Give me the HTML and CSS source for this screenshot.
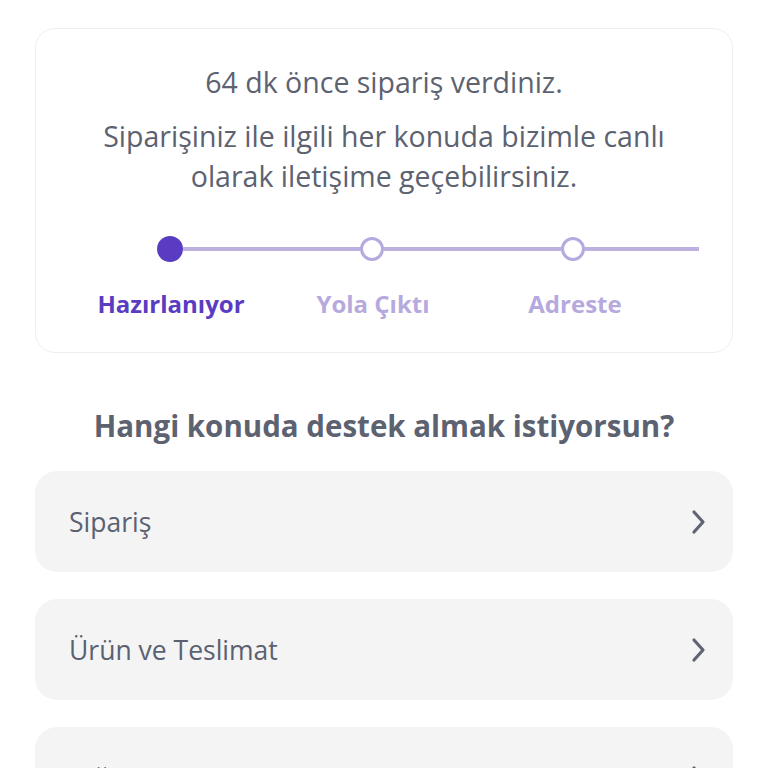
FILE: index.html
```html
<!DOCTYPE html>
<html lang="tr">
<head>
<meta charset="utf-8">
<link rel="stylesheet" href="styles.css">
</head>
<body>
<div class="page">
  <section class="card">
    <p class="time">64 dk önce sipariş verdiniz.</p>
    <p class="info">Siparişiniz ile ilgili her konuda bizimle canlı olarak iletişime geçebilirsiniz.</p>
    <div class="track">
      <span class="dot filled"></span>
      <span class="line l1"></span>
      <span class="dot"></span>
      <span class="line l1"></span>
      <span class="dot"></span>
      <span class="line l2"></span>
    </div>
    <div class="labels">
      <span class="label active">Hazırlanıyor</span>
      <span class="label">Yola Çıktı</span>
      <span class="label">Adreste</span>
    </div>
  </section>
  <h2 class="heading">Hangi konuda destek almak istiyorsun?</h2>
  <ul class="topics">
    <li class="topic"><span>Sipariş</span><svg class="chev" width="20" height="26" viewBox="0 0 20 26"><path d="M5 3 L14 13 L5 23" fill="none" stroke="#5f6570" stroke-width="3.2" stroke-linecap="round" stroke-linejoin="round"/></svg></li>
    <li class="topic"><span>Ürün ve Teslimat</span><svg class="chev" width="20" height="26" viewBox="0 0 20 26"><path d="M5 3 L14 13 L5 23" fill="none" stroke="#5f6570" stroke-width="3.2" stroke-linecap="round" stroke-linejoin="round"/></svg></li>
    <li class="topic"><span>Diğer</span><svg class="chev" width="20" height="26" viewBox="0 0 20 26"><path d="M5 3 L14 13 L5 23" fill="none" stroke="#5f6570" stroke-width="3.2" stroke-linecap="round" stroke-linejoin="round"/></svg></li>
  </ul>
</div>
</body>
</html>
```

FILE: styles.css
```css
html, body {
  margin: 0;
  padding: 0;
  background: #ffffff;
}
body {
  font-family: "Open Sans", "Noto Sans", sans-serif;
  color: #5c6270;
}
.page {
  padding: 28px 35px 0 35px;
}
.card {
  border: 1.5px solid #eeeef3;
  border-radius: 20px;
  padding: 35px 34px 32px 34px;
  text-align: center;
}
.time {
  margin: 0;
  font-size: 28.5px;
  font-weight: 500;
  line-height: 36px;
}
.info {
  margin: 16px auto 0 auto;
  font-size: 28.5px;
  font-weight: 500;
  line-height: 40px;
  max-width: 600px;
}
.track {
  display: flex;
  align-items: center;
  margin: 40px 0 0 87px;
  height: 26px;
}
.dot {
  width: 18px;
  height: 18px;
  border: 3px solid #b5a9de;
  border-radius: 50%;
  background: #fff;
  flex: none;
}
.dot.filled {
  width: 26px;
  height: 26px;
  border: none;
  background: #5a3cc2;
}
.line {
  height: 4px;
  background: #bdb1e2;
  flex: none;
}
.line.l1 { width: 177px; }
.line.l2 { width: 114px; }
.labels {
  display: flex;
  margin: 26px 0 0 0;
}
.label {
  width: 202px;
  font-size: 24px;
  font-weight: 700;
  line-height: 32px;
  color: #b5a9de;
  text-align: center;
}
.label.active {
  color: #5a3cc2;
}
.heading {
  margin: 53px 0 0 0;
  text-align: center;
  font-size: 29.5px;
  line-height: 40px;
  font-weight: 700;
  color: #5c6270;
}
.topics {
  list-style: none;
  margin: 25px 0 0 0;
  padding: 0;
  display: flex;
  flex-direction: column;
  gap: 27px;
}
.topic {
  height: 101px;
  border-radius: 22px;
  background: #f4f4f5;
  display: flex;
  align-items: center;
  justify-content: space-between;
  padding: 0 24px 0 34px;
  font-size: 26.5px;
  font-weight: 500;
  color: #5a6170;
}
.chev { flex: none; }
```
